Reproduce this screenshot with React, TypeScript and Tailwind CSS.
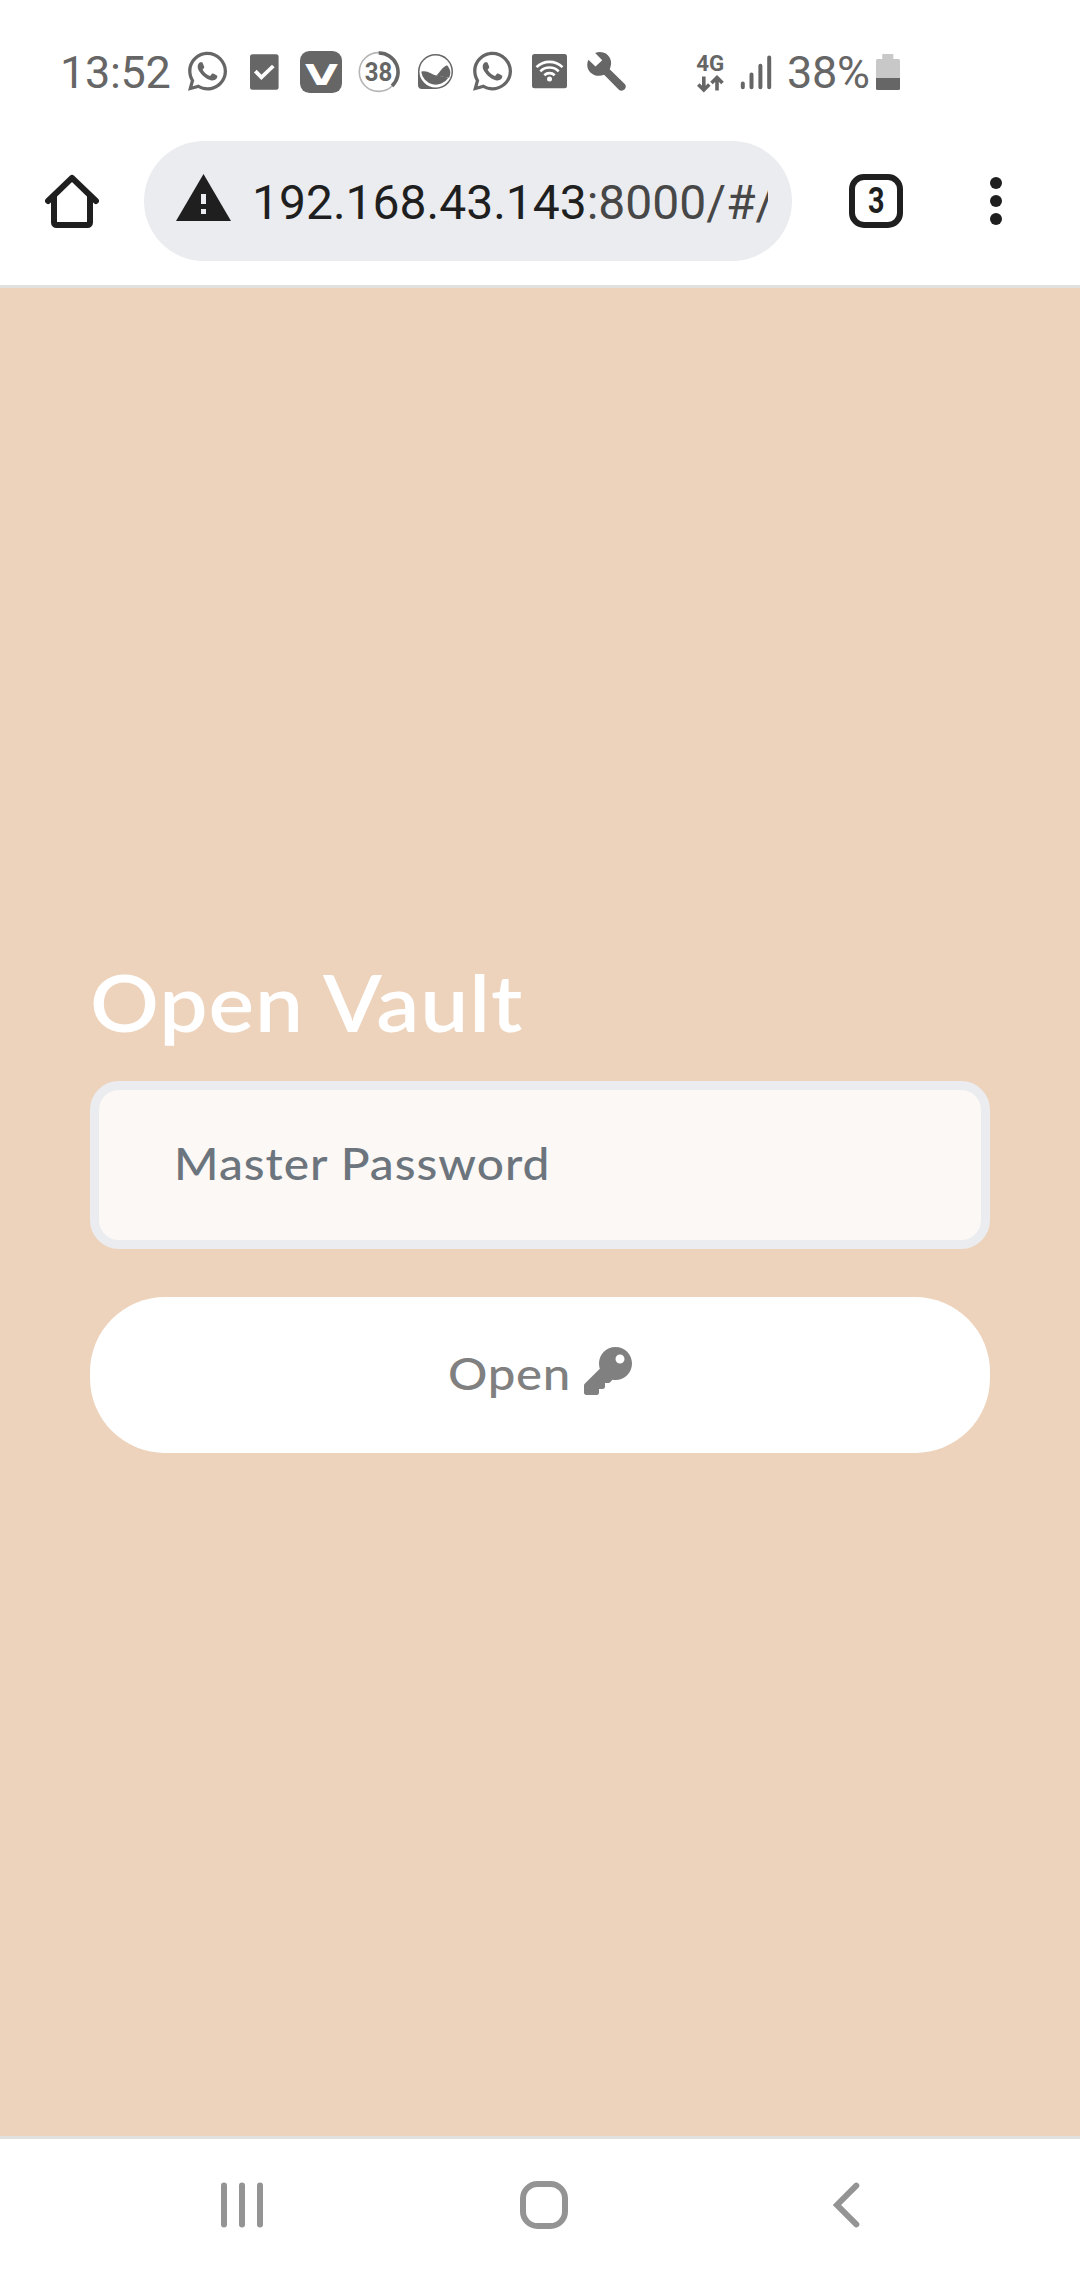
import { FaKey, FaWhatsapp } from "react-icons/fa";

const GREY = "#666666";
const INK = "#1f1f1f";
const NAV = "#949494";

function StatusBar() {
  return (
    <header className="flex h-[117px] shrink-0 items-center pt-[26px] pl-[60px] text-[45px] leading-none text-[#666666]">
      <span className="w-28 shrink-0 pt-0.5 tracking-[-0.3px] whitespace-nowrap">13:52</span>
      <FaWhatsapp className="ml-4 h-[44.6px] w-[39px] shrink-0" preserveAspectRatio="none" />
      <svg className="ml-[23px] h-9 w-[29px] shrink-0" viewBox="0 0 29 36">
        <rect x="0" y="0.3" width="28.6" height="35.4" rx="2.5" fill={GREY} />
        <path d="M5.3 17.2l6.1 6.2L23.3 12" fill="none" stroke="#fff" strokeWidth="3.8" />
      </svg>
      <svg className="ml-[21px] h-[42px] w-[42px] shrink-0" viewBox="0 0 42 42">
        <rect width="42" height="42" rx="9.5" fill={GREY} />
        <text x="5" y="33.5" fontFamily="DejaVu Sans, sans-serif" fontWeight="700" fontSize="29" textLength="33" lengthAdjust="spacingAndGlyphs" fill="#fff">V</text>
      </svg>
      <svg className="ml-4 h-[42px] w-[42px] shrink-0" viewBox="0 0 42 42">
        <circle cx="20.7" cy="21" r="19.4" fill="none" stroke="#b5b5b5" strokeWidth="1.6" />
        <path d="M20.7 2A19 19 0 0 1 34 34.9" fill="none" stroke={GREY} strokeWidth="3.6" />
        <text x="20.6" y="29.8" textAnchor="middle" fontFamily="Roboto, sans-serif" fontWeight="700" fontSize="25" textLength="27.5" lengthAdjust="spacingAndGlyphs" fill={GREY}>38</text>
      </svg>
      <svg className="ml-[18px] h-[35px] w-[35px] shrink-0" viewBox="0 0 35 35">
        <path d="M0 17v14a4 4 0 0 0 4 4h14A17.5 17.5 0 1 0 0 17z" fill={GREY} />
        <circle cx="17.5" cy="17.5" r="16" fill="#fff" />
        <path d="M3.2 17.8c6.5-2 10 3 15 3.700 5 1 8 .5 12 2.500A14.800 14.800 0 0 1 3.200 17.800z" fill={GREY} />
        <path d="M18.200 21.500c4-3 5-7.700 10.800-10.200 3.800 4.500 4.100 7.500 2.200 12.500-4-1-8-1-13-2.300z" fill={GREY} />
      </svg>
      <FaWhatsapp className="ml-5 h-[44.6px] w-[39px] shrink-0" preserveAspectRatio="none" />
      <svg className="ml-5 h-[35px] w-[35px] shrink-0" viewBox="0 0 35 35">
        <rect width="35" height="34.3" rx="2.5" fill={GREY} />
        <g fill="none" stroke="#fff" strokeWidth="2.6">
          <path d="M4.5 13.2a18.500 18.500 0 0 1 26 0" />
          <path d="M8.300 17.300a13 13 0 0 1 18.400 0" />
          <path d="M12.300 21.200a7.500 7.500 0 0 1 10.400 0" />
        </g>
        <circle cx="17.5" cy="25" r="2.5" fill="#fff" />
      </svg>
      <svg className="ml-5 h-[39px] w-[39px] shrink-0" viewBox="0 0 39 39">
        <path d="M38 32.3L22.700 17.300C25.200 11 24.300 6.500 20.600 2.900 17.200-.2 12-.6 8.200 1l7 7.200-6.700 6.300L1.400 7.700C-.6 12 0 17 3.100 20.200c3.900 3.900 9.300 4.400 14 2.600l14.800 15c3.600 3.200 9-1.700 6.100-5.500z" fill={GREY} />
      </svg>
      <svg className="ml-[70px] h-[42px] w-[30px] shrink-0" viewBox="0 0 30 42">
        <text x="0.3" y="19.6" fontFamily="Roboto, sans-serif" fontWeight="700" fontSize="22.5" textLength="28" lengthAdjust="spacingAndGlyphs" fill={GREY}>4G</text>
        <g fill="none" stroke={GREY} strokeWidth="3.6">
          <path d="M7.800 25.500v14M2.300 33.500l5.500 5.500 5.500-5.500" />
          <path d="M21 39.500V26.500M15.500 32l5.500-5.500 5.500 5.500" />
        </g>
      </svg>
      <svg className="ml-3.5 h-9 w-8 shrink-0" viewBox="0 0 32 36">
        <g stroke={GREY} strokeWidth="4" strokeLinecap="round">
          <path d="M2.800 29.500v3.800M11.500 20.600v12.700M20.400 11.700v21.600M29.200 3.500v29.800" />
        </g>
      </svg>
      <span className="ml-[15px] w-[89px] shrink-0 pt-0.5 tracking-[-0.3px] whitespace-nowrap">38%</span>
      <svg className="h-9 w-6 shrink-0" viewBox="0 0 24 36">
        <path d="M6.300 0h11v5H22.500A1.500 1.500 0 0 1 24 6.500V24H0V6.500A1.500 1.500 0 0 1 1.500 5H6.300z" fill="#c8c8c8" />
        <path d="M0 24h24v10.500a1.500 1.500 0 0 1-1.500 1.500h-21A1.500 1.500 0 0 1 0 34.500z" fill={GREY} />
      </svg>
    </header>
  );
}

function Toolbar() {
  return (
    <div className="flex h-[171px] shrink-0 items-center border-b-[3px] border-[#e1e2de] pl-[45px]">
      <svg className="h-[54px] w-[54px] shrink-0" viewBox="0 0 54 54" fill="none" stroke={INK} strokeWidth="6">
        <path d="M9 22v26.500a2.500 2.500 0 0 0 2.500 2.500h31a2.500 2.500 0 0 0 2.500-2.500V22" />
        <path d="M3 27L27 3.800 51 27" strokeLinecap="round" strokeLinejoin="round" />
      </svg>
      <div className="ml-[45px] flex h-[120px] w-[648px] shrink-0 items-center rounded-full bg-[#ebecf0] pl-8">
        <svg className="-mt-[7px] h-[47px] w-[55px] shrink-0" viewBox="0 0 55 47">
          <path d="M27.500 0L55 47H0z" fill={INK} />
          <path d="M25 20h5v10h-5zM25 35h5v5h-5z" fill="#ebecf0" />
        </svg>
        <div className="mt-[3px] ml-[21px] w-[516px] overflow-hidden text-[48px] leading-[60px] whitespace-nowrap text-[#1f1f1f]">
          192.168.43.143<span className="text-[#474747]">:8000/#/</span>
        </div>
      </div>
      <div className="ml-[57px] flex h-[54px] w-[54px] shrink-0 items-center justify-center rounded-[15px] border-[6px] border-[#1f1f1f] text-[36px] leading-none font-bold text-[#1f1f1f]">
        <span className="scale-x-[0.8]">3</span>
      </div>
      <div className="ml-[87px] flex flex-col gap-1.5">
        <i className="h-3 w-3 rounded-full bg-[#1f1f1f]" />
        <i className="h-3 w-3 rounded-full bg-[#1f1f1f]" />
        <i className="h-3 w-3 rounded-full bg-[#1f1f1f]" />
      </div>
    </div>
  );
}

function VaultForm() {
  return (
    <main className="flex grow flex-col bg-[#edd3bc] px-[90px] pt-[665px] font-['Lato',sans-serif]">
      <h1 className="h-32 origin-left scale-x-[1.1] text-[78px] leading-[98px] font-semibold tracking-[0.8px] whitespace-nowrap text-white">Open Vault</h1>
      <div className="flex h-[168px] items-center rounded-[29px] border-[9px] border-[#ebecf0] bg-[#fcf8f5] pl-[75px] text-[43.5px] font-medium text-[#6c757d]">
        <span className="origin-left scale-x-[1.1] pb-0.5 tracking-[0.9px] whitespace-nowrap">Master Password</span>
      </div>
      <button className="mt-12 flex h-[156px] items-center rounded-[75px] bg-white pl-[358px] text-[43.5px] font-medium text-[#808080]">
        <span className="w-[136px] origin-left scale-x-[1.13] pb-0.5 text-left tracking-[0.6px]">Open</span>
        <FaKey className="mb-2 h-12 w-12" />
      </button>
    </main>
  );
}

function NavBar() {
  return (
    <nav className="flex h-36 shrink-0 items-start border-t-[3px] border-[#e1e2de] pt-[42px] pl-[221px]">
      <svg className="h-12 w-[42px]" viewBox="0 0 42 48" stroke={NAV} strokeWidth="6" strokeLinecap="round">
        <path d="M3 4.500v39M21 4.500v39M39 4.500v39" />
      </svg>
      <svg className="ml-[257px] h-12 w-12" viewBox="0 0 48 48">
        <rect x="3" y="3" width="42" height="42" rx="14.500" fill="none" stroke={NAV} strokeWidth="6" />
      </svg>
      <svg className="ml-[264px] h-12 w-7" viewBox="0 0 28 48">
        <path d="M24.300 4.600L5 24l19.300 19.400" fill="none" stroke={NAV} strokeWidth="6" strokeLinecap="round" />
      </svg>
    </nav>
  );
}

export default function App() {
  return (
    <div className="flex h-[2280px] w-[1080px] flex-col overflow-hidden bg-white font-['Roboto',sans-serif]">
      <StatusBar />
      <Toolbar />
      <VaultForm />
      <NavBar />
    </div>
  );
}
